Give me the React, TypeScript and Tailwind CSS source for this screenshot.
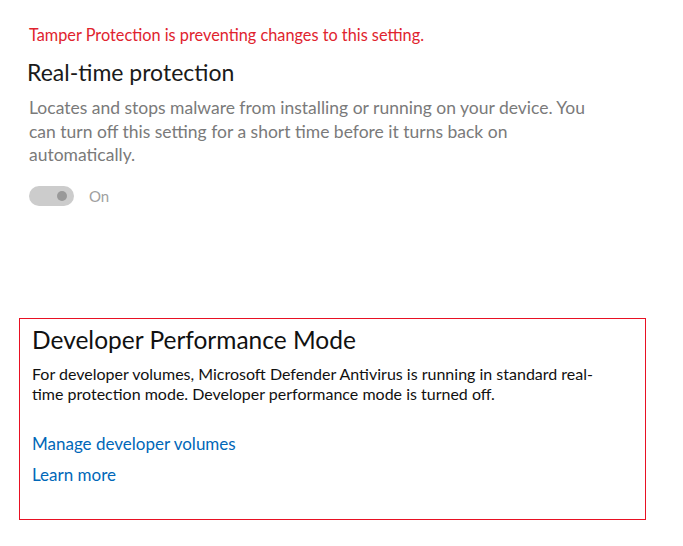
export default function App() {
  return (
    <div className="w-[683px] h-[546px] bg-white font-['Lato','Noto_Sans',sans-serif] overflow-hidden">
      <div className="h-[318px] pl-[29px] pt-[25px]">
        <p className="text-[16.3px] leading-[20px] text-[#e0232e]">
          Tamper Protection is preventing changes to this setting.
        </p>
        <h2 className="mt-[12px] -ml-[2px] text-[23px] leading-[30px] text-[#1a1a1a]">Real-time protection</h2>
        <p className="mt-[9px] w-[575px] text-[17.5px] leading-[23.5px] text-[#7a7a7a]">
          Locates and stops malware from installing or running on your device. You can turn off this setting for a short
          time before it turns back on automatically.
        </p>
        <div className="mt-[18px] flex items-center gap-[15px]">
          <div className="w-[45px] h-[20px] rounded-full bg-[#cccccc] flex items-center justify-end pr-[7px]">
            <div className="w-[10px] h-[10px] rounded-full bg-[#999999]" />
          </div>
          <span className="text-[15px] text-[#a0a0a0]">On</span>
        </div>
      </div>
      <div className="ml-[19px] w-[627px] h-[202px] border border-[#e81123] px-[12px] pt-[5px]">
        <h2 className="text-[24.5px] leading-[32px] text-[#111111]">Developer Performance Mode</h2>
        <p className="mt-[8px] w-[575px] text-[16px] leading-[19.5px] text-[#111111]">
          For developer volumes, Microsoft Defender Antivirus is running in standard real-time protection mode. Developer
          performance mode is turned off.
        </p>
        <div className="mt-[30px] flex flex-col gap-[9px] items-start">
          <a className="text-[17px] leading-[22px] text-[#0067b8]">Manage developer volumes</a>
          <a className="text-[17px] leading-[22px] text-[#0067b8]">Learn more</a>
        </div>
      </div>
    </div>
  );
}
